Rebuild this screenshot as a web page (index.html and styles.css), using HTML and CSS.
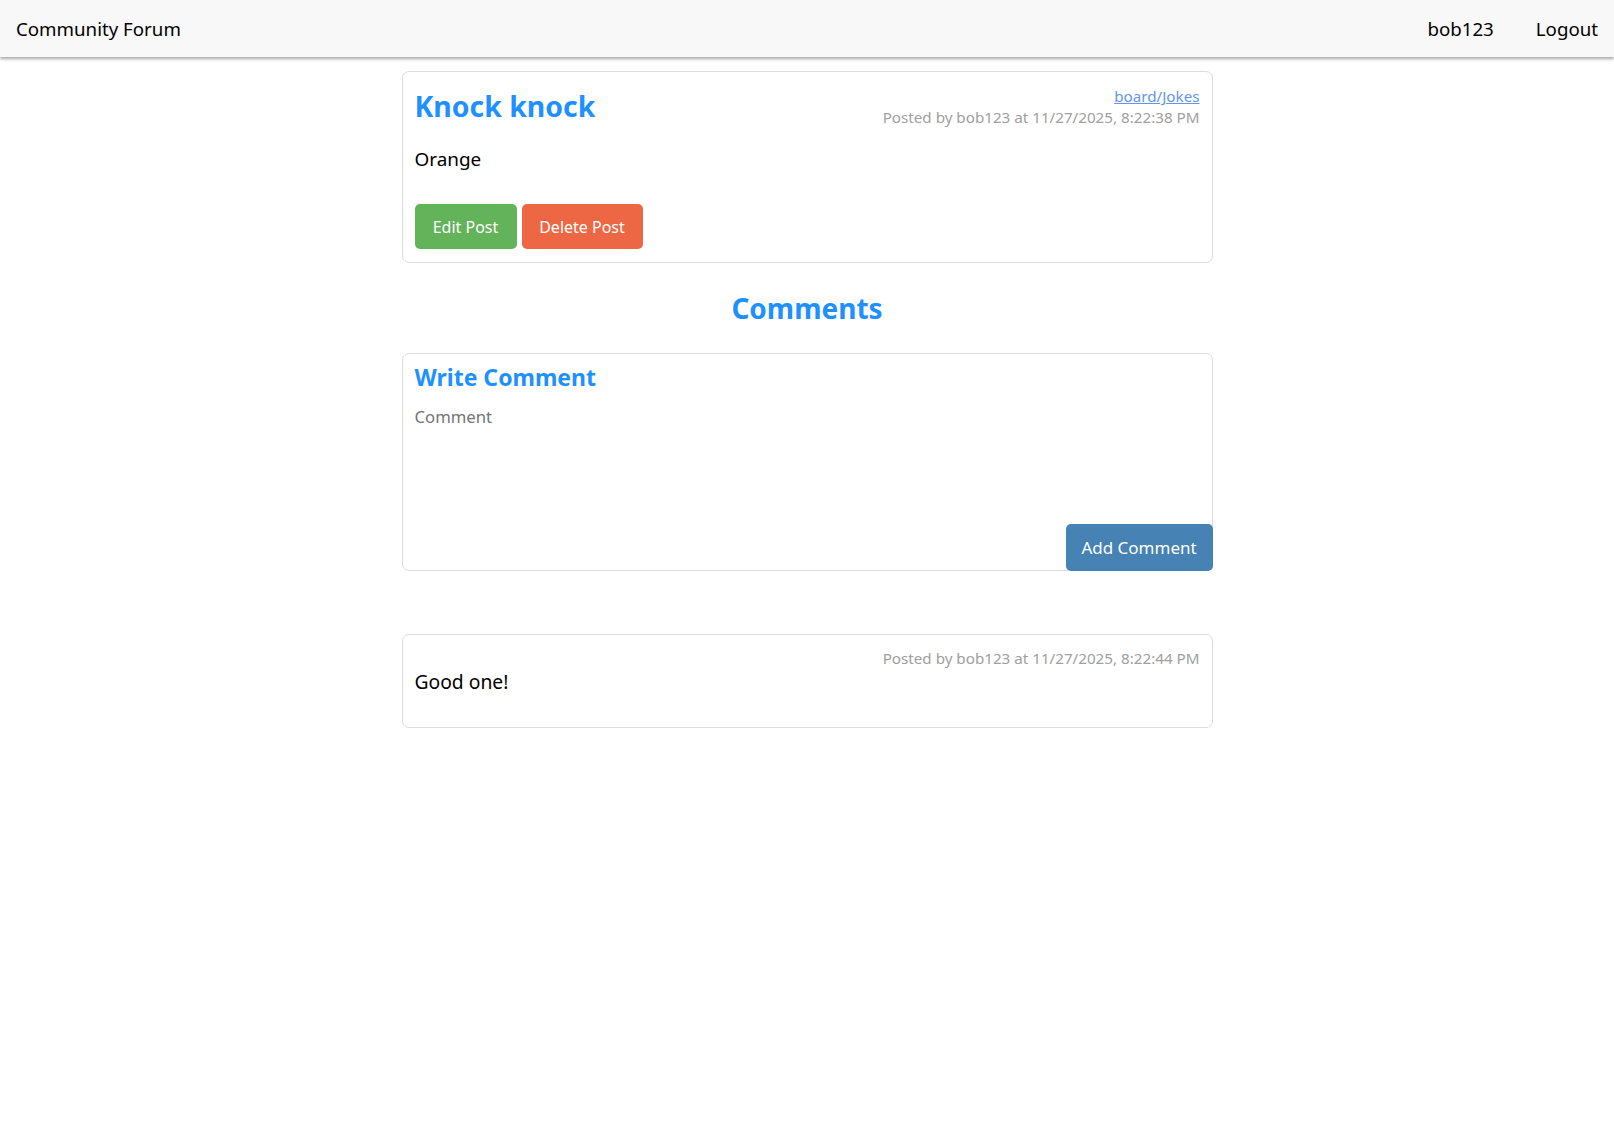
FILE: index.html
```html
<!DOCTYPE html>
<html lang="en">
<head>
<meta charset="utf-8">
<title>Community Forum</title>
<link rel="stylesheet" href="styles.css">
</head>
<body>
<nav class="navbar">
  <span class="brand">Community Forum</span>
  <div class="nav-links">
    <a class="nav-link" href="#">bob123</a>
    <a class="nav-link" href="#">Logout</a>
  </div>
</nav>
<main class="container">
  <article class="card post">
    <div class="post-header">
      <h1 class="post-title">Knock knock</h1>
      <div class="post-meta">
        <a class="board-link" href="#">board/Jokes</a>
        <div class="meta">Posted by bob123 at 11/27/2025, 8:22:38 PM</div>
      </div>
    </div>
    <p class="post-body">Orange</p>
    <div class="actions">
      <button class="btn btn-edit">Edit Post</button>
      <button class="btn btn-delete">Delete Post</button>
    </div>
  </article>

  <h2 class="comments-heading">Comments</h2>

  <form class="card comment-form">
    <h3 class="form-title">Write Comment</h3>
    <textarea class="comment-input" placeholder="Comment"></textarea>
    <button type="button" class="btn btn-add">Add Comment</button>
  </form>

  <div class="card comment">
    <div class="meta comment-meta">Posted by bob123 at 11/27/2025, 8:22:44 PM</div>
    <p class="comment-body">Good one!</p>
  </div>
</main>
</body>
</html>
```
FILE: styles.css
```css
* { box-sizing: border-box; }
body {
  margin: 0;
  font-family: "Noto Sans", "Open Sans", sans-serif;
  color: #000;
  background: #fff;
}
.navbar {
  height: 57px;
  background: #f8f8f8;
  box-shadow: 0 2px 3px rgba(0,0,0,0.35);
  display: flex;
  align-items: center;
  justify-content: space-between;
  padding: 0 16px;
  font-size: 18.7px;
}
.brand { color: #000; }
.nav-links { display: flex; gap: 42px; }
.nav-link { color: #000; text-decoration: none; }

.container {
  width: 811px;
  margin: 14px auto 0;
}
.card {
  border: 1px solid #dcdcdc;
  border-radius: 7px;
  background: #fff;
}
.post { padding: 12px 12px 13px; }
.post-header {
  display: flex;
  justify-content: space-between;
  align-items: flex-start;
}
.post-title {
  margin: 0;
  font-size: 28.4px;
  line-height: 36px;
  color: #1e90ff;
  font-weight: 700;
  padding-top: 4px;
}
.post-meta {
  text-align: right;
  font-size: 15.2px;
  line-height: 21px;
  padding-top: 2px;
}
.board-link { color: #6495ed; }
.meta { color: #a0a0a0; font-size: 15.2px; }
.post-body {
  margin: 18px 0 0;
  font-size: 18.9px;
  line-height: 26px;
}
.actions {
  margin-top: 32px;
  display: flex;
  gap: 5px;
}
.btn {
  border: none;
  border-radius: 5px;
  color: #fff;
  font-family: inherit;
  font-size: 16px;
  height: 45px;
  padding: 0;
  white-space: nowrap;
  cursor: pointer;
}
.btn-edit { background: #62b35a; width: 102px; }
.btn-delete { background: #ed6744; width: 121px; }

.comments-heading {
  text-align: center;
  color: #1e90ff;
  font-size: 28px;
  line-height: 36px;
  margin: 27px 0 27px;
}
.comment-form {
  display: flex;
  flex-direction: column;
  padding: 7px 0 0 12px;
  height: 218px;
}
.form-title {
  margin: 0;
  color: #1e90ff;
  font-size: 23px;
  line-height: 32px;
}
.comment-input {
  flex: 1;
  border: none;
  resize: none;
  outline: none;
  padding: 0;
  margin-top: 12px;
  font-family: inherit;
  font-size: 16.7px;
  line-height: 24px;
  color: #000;
  background: transparent;
}
.comment-input::placeholder { color: #757575; }
.btn-add {
  align-self: flex-end;
  background: #4682b4;
  width: 147px;
  height: 47px;
  font-size: 17px;
  margin: 0 -1px -1px 0;
}

.comment {
  margin-top: 63px;
  padding: 12px;
  height: 94px;
}
.comment-meta { text-align: right; line-height: 21px; padding-top: 1px; }
.comment-body {
  margin: 0;
  font-size: 19.3px;
  line-height: 26px;
}
```
